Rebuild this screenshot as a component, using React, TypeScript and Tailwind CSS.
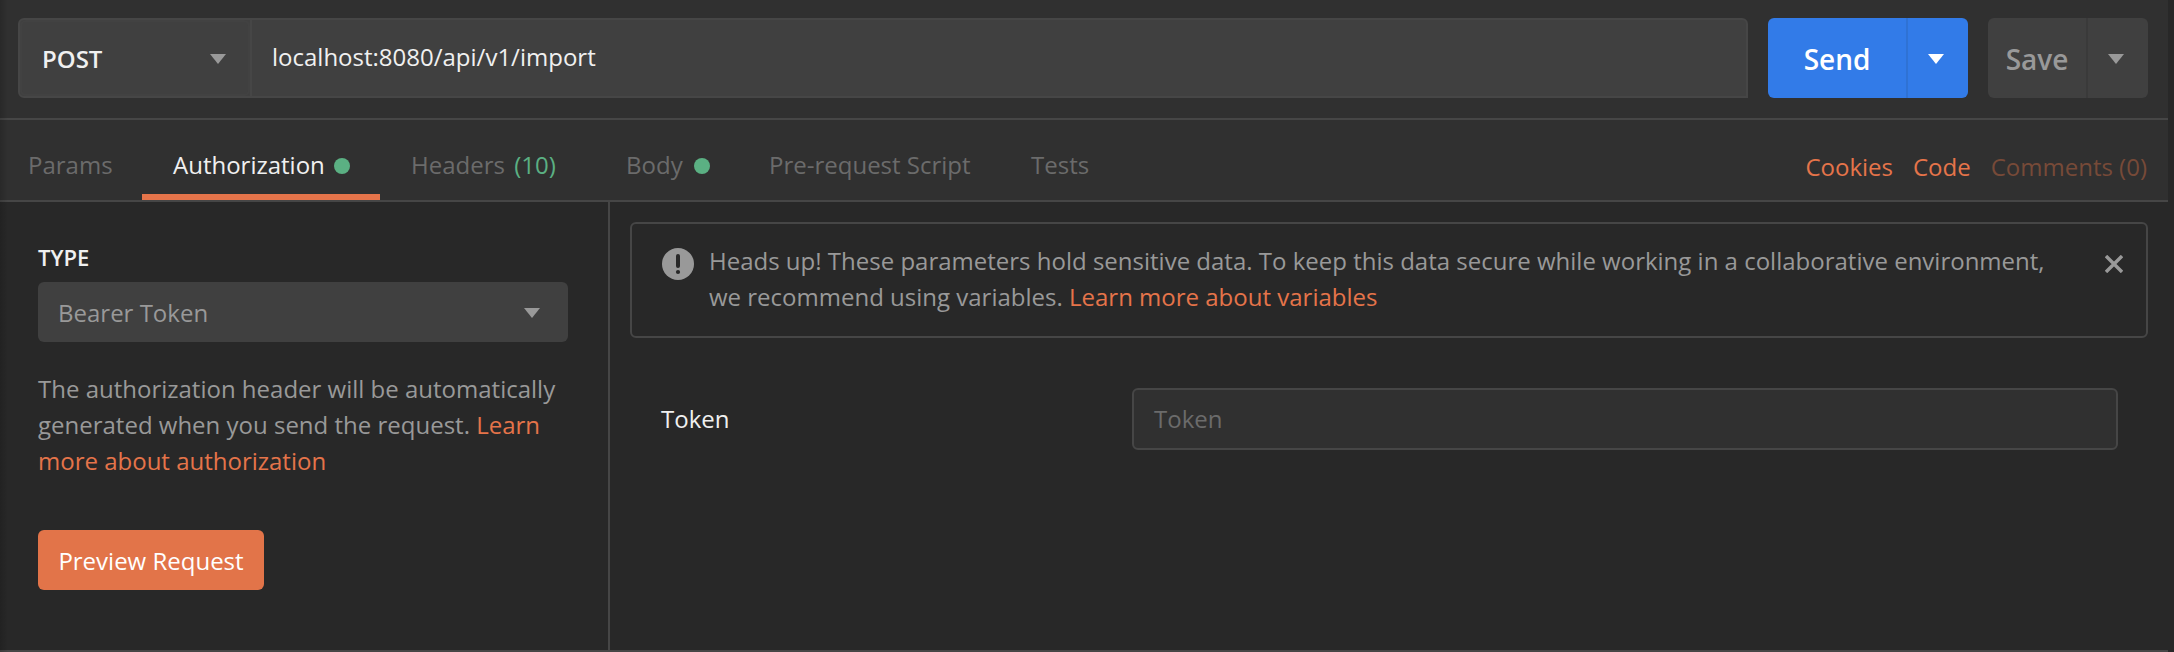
import React from "react";

function Caret({ className }: { className: string }) {
  return (
    <svg viewBox="0 0 16 10" width="16" height="10" className={className} fill="currentColor">
      <path d="M0 0H16L8 10Z" />
    </svg>
  );
}

function Dot({ className }: { className: string }) {
  return <span className={`h-4 w-4 rounded-full bg-[#5bb083] ${className}`} />;
}

function RequestBar() {
  return (
    <div className="flex h-[120px] border-b-2 border-[#464646] pt-[18px] pl-[18px] text-[24px]">
      <div className="flex h-20 w-[1730px] rounded-l-md rounded-tr-md border-2 border-[#464646] bg-[#404040]">
        <div className="flex w-[232px] border-r-2 border-[#464646]">
          <div className="flex flex-1 items-center justify-between rounded-md border-2 border-[#424242] pt-0.5 pr-[22px] pl-5">
            <span className="font-semibold text-[#f0f0f0]">POST</span>
            <Caret className="text-[#999999]" />
          </div>
        </div>
        <div className="flex items-center pb-0.5 pl-5 text-[#f0f0f0]">localhost:8080/api/v1/import</div>
      </div>
      <div className="ml-5 flex h-20 w-[200px] rounded-md bg-[#327be8] text-white">
        <div className="flex w-[140px] items-center justify-center border-r-2 border-[#2f72d4] pt-0.5 text-[28px] font-semibold">Send</div>
        <div className="flex flex-1 items-center justify-center pt-0.5 pr-1">
          <Caret className="" />
        </div>
      </div>
      <div className="ml-5 flex h-20 w-40 rounded-md bg-[#404040] text-[#999999]">
        <div className="flex w-[100px] items-center justify-center border-r-2 border-[#3a3a3a] pt-0.5 text-[28px] font-semibold">Save</div>
        <div className="flex flex-1 items-center justify-center pt-0.5 pr-1">
          <Caret className="" />
        </div>
      </div>
    </div>
  );
}

function TabBar() {
  return (
    <div className="flex h-[82px] justify-between border-b-2 border-[#464646] pr-[21px] text-[24px] leading-[36px] text-[#6b6b6b]">
      <nav className="flex">
        <div className="w-[142px] pt-[27px] pl-7">Params</div>
        <div className="flex w-[238px] border-b-[6px] border-[#e5744a] pt-[27px] pl-[31px] text-[#f0f0f0]">
          Authorization
          <Dot className="mt-[11px] ml-[9px]" />
        </div>
        <div className="w-[215px] pt-[27px] pl-[31px]">
          Headers <span className="ml-[3px] text-[#5bb083]">(10)</span>
        </div>
        <div className="flex w-[144px] pt-[27px] pl-[31px]">
          Body
          <Dot className="mt-[11px] ml-[11px]" />
        </div>
        <div className="w-[261px] pt-[27px] pl-[30px]">Pre-request Script</div>
        <div className="pt-[27px] pl-[31px]">Tests</div>
      </nav>
      <div className="flex gap-5 pt-[29px] text-[#e5744a]">
        <span>Cookies</span>
        <span>Code</span>
        <span className="text-[#774a38]">Comments (0)</span>
      </div>
    </div>
  );
}

function AuthTypePanel() {
  return (
    <aside className="w-[610px] border-r-2 border-[#464646] pt-10 pl-[38px] text-[24px] leading-[36px] text-[#999999]">
      <div className="h-10 text-[22px] leading-[30px] font-semibold text-[#f0f0f0]">TYPE</div>
      <div className="flex h-[60px] w-[530px] items-center justify-between rounded-md bg-[#404040] pt-0.5 pr-[28px] pl-5">
        <span>Bearer Token</span>
        <Caret className="" />
      </div>
      <p className="mt-[29px] w-[530px]">
        The authorization header will be automatically generated when you send the request.{" "}
        <span className="text-[#e5744a]">Learn more about authorization</span>
      </p>
      <button className="mt-[51px] flex h-[60px] w-[226px] items-center justify-center rounded-md bg-[#e27449] pt-0.5 whitespace-nowrap text-white">
        Preview Request
      </button>
    </aside>
  );
}

function TokenPanel() {
  return (
    <main className="flex-1 pt-5 pl-5 text-[24px] leading-[36px]">
      <div className="flex h-[116px] w-[1518px] rounded-md border-2 border-[#464646] text-[#999999]">
        <svg viewBox="0 0 32 32" width="32" height="32" className="mt-6 ml-[30px] shrink-0">
          <circle cx="16" cy="16" r="16" fill="#999999" />
          <path d="M16 8V18" stroke="#282828" strokeWidth="4" strokeLinecap="round" />
          <circle cx="16" cy="24" r="2.1" fill="#282828" />
        </svg>
        <p className="mt-[19px] ml-[15px] flex-1 whitespace-nowrap">
          Heads up! These parameters hold sensitive data. To keep this data secure while working in a collaborative environment,
          <br />
          we recommend using variables. <span className="text-[#e5744a]">Learn more about variables</span>
        </p>
        <svg viewBox="0 0 18 18" width="18" height="18" className="mt-[31px] mr-[23px] shrink-0" stroke="#999999" strokeWidth="3.4">
          <path d="M1 1L17 17M17 1L1 17" />
        </svg>
      </div>
      <div className="mt-[50px] flex items-center pl-[31px]">
        <div className="w-[471px] text-[#f0f0f0]">Token</div>
        <div className="flex h-[62px] w-[986px] items-center rounded-md border-2 border-[#464646] bg-[#303030] pl-5 text-[#6b6b6b]">Token</div>
      </div>
    </main>
  );
}

export default function App() {
  return (
    <div className="relative flex h-[652px] w-[2174px] overflow-hidden bg-[#282828] font-['Open_Sans',sans-serif]">
      <div className="flex w-[2168px] flex-col">
        <div className="bg-[#303030]">
          <RequestBar />
          <TabBar />
        </div>
        <div className="flex flex-1 border-b-2 border-[#464646]">
          <AuthTypePanel />
          <TokenPanel />
        </div>
      </div>
      <div className="absolute inset-y-0 left-0 w-2 bg-linear-to-r from-black/15 to-transparent" />
    </div>
  );
}
